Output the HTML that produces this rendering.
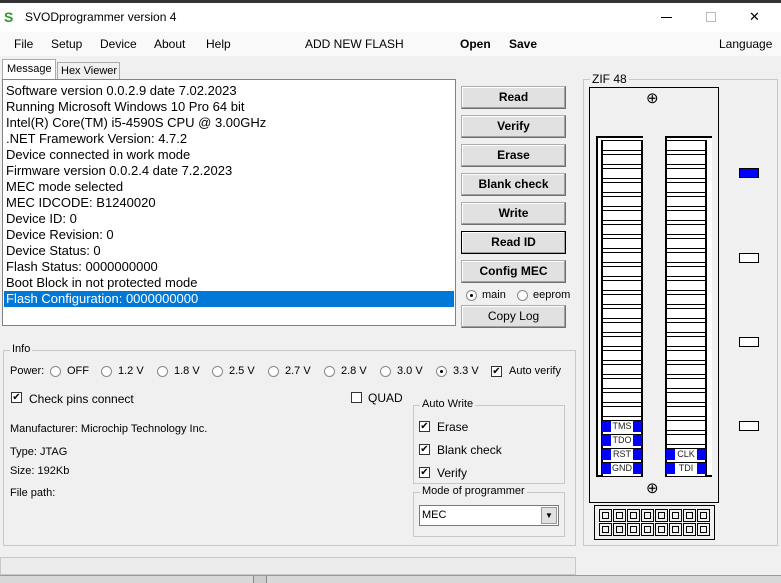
<!DOCTYPE html>
<html><head><meta charset="utf-8"><style>
*{box-sizing:border-box;margin:0;padding:0}
body{width:781px;height:583px;overflow:hidden;background:#f0f0f0;font-family:"Liberation Sans",sans-serif;font-size:12px;color:#000;position:relative}
.a{position:absolute}
.btn{position:absolute;left:461px;width:105px;height:23px;background:#e1e1e1;border:1px solid #adadad;border-right-color:#707070;border-bottom-color:#707070;box-shadow:inset -1px -1px 0 #a0a0a0,inset 1px 1px 0 #fff;text-align:center;font-weight:bold;font-size:12px;line-height:21px}
.grp{position:absolute;border:1px solid #c8c8c8}
.lg{position:absolute;top:-8px;background:#f0f0f0;padding:0 2px;font-size:12px}
.cb{position:absolute;width:11px;height:11px;border:1px solid #333;background:#fff;font-size:10px;line-height:9px;text-align:center}
.rd{position:absolute;width:11px;height:11px;border-radius:50%;border:1px solid #888;background:#fff}
.rd.on:after{content:"";position:absolute;left:3px;top:3px;width:3px;height:3px;border-radius:50%;background:#000}
.col{position:absolute;background:#fff;border:2px solid #000;border-right:none}
.pins{position:absolute;background:repeating-linear-gradient(#000 0 1px,#fff 1px 10px,#000 10px 11px,#fff 11px 14px);border-left:2px solid #000;border-right:2px solid #000}
.lab{position:absolute;height:11px;background:#0000ff;font-size:9px;line-height:11px;text-align:center;color:#222}
.lab span{background:#fff;display:inline-block;width:22px}
.sq{position:absolute;width:20px;height:10px;border:1px solid #000;background:#fff}
.t{font-size:11px}
</style></head><body>
<div class="a" style="left:0;top:0;width:781px;height:3px;background:#333"></div>
<div class="a" style="left:0;top:3px;width:781px;height:29px;background:#fff"></div>
<div class="a" style="left:4px;top:9px;color:#2a9a2a;font-weight:bold;font-size:14px">S</div>
<div class="a" style="left:25px;top:10px;font-size:12px">SVODprogrammer version 4</div>
<div class="a" style="left:661px;top:17px;width:11px;height:1px;background:#000"></div>
<div class="a" style="left:706px;top:12px;width:10px;height:10px;border:1px solid #bbb"></div>
<div class="a" style="left:749px;top:9px;font-size:13px">✕</div>
<div class="a" style="left:0;top:32px;width:781px;height:24px;background:#f9f9f9"></div>
<div class="a" style="top:37px;left:14px;font-size:12px">File</div>
<div class="a" style="top:37px;left:51px;font-size:12px">Setup</div>
<div class="a" style="top:37px;left:100px;font-size:12px">Device</div>
<div class="a" style="top:37px;left:154px;font-size:12px">About</div>
<div class="a" style="top:37px;left:206px;font-size:12px">Help</div>
<div class="a" style="top:37px;left:305px;font-size:12px">ADD NEW FLASH</div>
<div class="a" style="top:37px;left:460px;font-size:12px;font-weight:bold">Open</div>
<div class="a" style="top:37px;left:509px;font-size:12px;font-weight:bold">Save</div>
<div class="a" style="top:37px;left:719px;font-size:12px">Language</div>
<div class="a" style="left:2px;top:59px;width:54px;height:21px;background:#fff;border:1px solid #aaa;border-bottom:none;font-size:11px;padding:3px 0 0 4px">Message</div>
<div class="a" style="left:57px;top:62px;width:63px;height:17px;border:1px solid #aaa;border-bottom:none;font-size:11px;padding:2px 0 0 3px">Hex Viewer</div>
<div class="a" style="left:2px;top:79px;width:454px;height:247px;background:#fff;border:1px solid #828282;font-size:13px;line-height:16px;padding:3px 0 0 3px">
<div>Software version 0.0.2.9 date 7.02.2023</div>
<div>Running Microsoft Windows 10 Pro 64 bit</div>
<div>Intel(R) Core(TM) i5-4590S CPU @ 3.00GHz</div>
<div>.NET Framework Version: 4.7.2</div>
<div>Device connected in work mode</div>
<div>Firmware version 0.0.2.4 date 7.2.2023</div>
<div>MEC mode selected</div>
<div>MEC IDCODE: B1240020</div>
<div>Device ID: 0</div>
<div>Device Revision: 0</div>
<div>Device Status: 0</div>
<div>Flash Status: 0000000000</div>
<div>Boot Block in not protected mode</div>
<div style="background:#0078d7;color:#fff;margin-left:-2px;padding-left:2px;width:450px">Flash Configuration: 0000000000</div>
</div>
<div class="btn" style="top:86px">Read</div>
<div class="btn" style="top:115px">Verify</div>
<div class="btn" style="top:144px">Erase</div>
<div class="btn" style="top:173px">Blank check</div>
<div class="btn" style="top:202px">Write</div>
<div class="btn" style="top:231px;border:1px solid #000">Read ID</div>
<div class="btn" style="top:260px">Config MEC</div>
<div class="rd on" style="left:466px;top:290px"></div><div class="a" style="left:482px;top:289px;font-size:11px">main</div>
<div class="rd" style="left:517px;top:290px"></div><div class="a" style="left:533px;top:289px;font-size:11px">eeprom</div>
<div class="btn" style="top:305px;font-weight:normal">Copy Log</div>

<div class="grp" style="left:583px;top:79px;width:195px;height:467px"><div class="lg" style="left:6px">ZIF 48</div></div>
<div class="a" style="left:589px;top:87px;width:130px;height:416px;border:1px solid #000"></div>
<div class="a" style="left:646px;top:91px;font-size:15px;line-height:15px">⊕</div>
<div class="a" style="left:646px;top:481px;font-size:15px;line-height:15px">⊕</div>
<div class="col" style="left:596px;top:136px;width:47px;height:341px"></div>
<div class="pins" style="left:601px;top:140px;width:42px;height:336px"></div>
<div class="col" style="left:665px;top:136px;width:47px;height:341px"></div>
<div class="pins" style="left:665px;top:140px;width:42px;height:336px"></div>
<div class="lab" style="left:602px;top:421px;width:40px"><span>TMS</span></div>
<div class="lab" style="left:602px;top:435px;width:40px"><span>TDO</span></div>
<div class="lab" style="left:602px;top:449px;width:40px"><span>RST</span></div>
<div class="lab" style="left:602px;top:463px;width:40px"><span>GND</span></div>
<div class="lab" style="left:666px;top:449px;width:40px"><span>CLK</span></div>
<div class="lab" style="left:666px;top:463px;width:40px"><span>TDI</span></div>
<div class="a" style="left:594px;top:505px;width:121px;height:35px;border:1px solid #000;padding:3px 0 0 4px;line-height:0">
<svg width="112" height="28"><g fill="none" stroke="#000">
<rect x="0.5" y="0.5" width="12" height="12"/><rect x="3.5" y="3.5" width="6" height="6"/>
<rect x="14.5" y="0.5" width="12" height="12"/><rect x="17.5" y="3.5" width="6" height="6"/>
<rect x="28.5" y="0.5" width="12" height="12"/><rect x="31.5" y="3.5" width="6" height="6"/>
<rect x="42.5" y="0.5" width="12" height="12"/><rect x="45.5" y="3.5" width="6" height="6"/>
<rect x="56.5" y="0.5" width="12" height="12"/><rect x="59.5" y="3.5" width="6" height="6"/>
<rect x="70.5" y="0.5" width="12" height="12"/><rect x="73.5" y="3.5" width="6" height="6"/>
<rect x="84.5" y="0.5" width="12" height="12"/><rect x="87.5" y="3.5" width="6" height="6"/>
<rect x="98.5" y="0.5" width="12" height="12"/><rect x="101.5" y="3.5" width="6" height="6"/>
<rect x="0.5" y="14.5" width="12" height="12"/><rect x="3.5" y="17.5" width="6" height="6"/>
<rect x="14.5" y="14.5" width="12" height="12"/><rect x="17.5" y="17.5" width="6" height="6"/>
<rect x="28.5" y="14.5" width="12" height="12"/><rect x="31.5" y="17.5" width="6" height="6"/>
<rect x="42.5" y="14.5" width="12" height="12"/><rect x="45.5" y="17.5" width="6" height="6"/>
<rect x="56.5" y="14.5" width="12" height="12"/><rect x="59.5" y="17.5" width="6" height="6"/>
<rect x="70.5" y="14.5" width="12" height="12"/><rect x="73.5" y="17.5" width="6" height="6"/>
<rect x="84.5" y="14.5" width="12" height="12"/><rect x="87.5" y="17.5" width="6" height="6"/>
<rect x="98.5" y="14.5" width="12" height="12"/><rect x="101.5" y="17.5" width="6" height="6"/>
</g></svg></div>
<div class="sq" style="left:739px;top:168px;background:#0000ff"></div>
<div class="sq" style="left:739px;top:253px"></div>
<div class="sq" style="left:739px;top:337px"></div>
<div class="sq" style="left:739px;top:421px"></div>

<div class="grp" style="left:3px;top:350px;width:573px;height:196px"><div class="lg t" style="left:6px">Info</div></div>
<div class="a t" style="left:10px;top:365px">Power:</div>
<div class="rd" style="left:50px;top:366px"></div><div class="a t" style="left:67px;top:365px">OFF</div>
<div class="rd" style="left:101px;top:366px"></div><div class="a t" style="left:118px;top:365px">1.2 V</div>
<div class="rd" style="left:157px;top:366px"></div><div class="a t" style="left:174px;top:365px">1.8 V</div>
<div class="rd" style="left:212px;top:366px"></div><div class="a t" style="left:229px;top:365px">2.5 V</div>
<div class="rd" style="left:268px;top:366px"></div><div class="a t" style="left:285px;top:365px">2.7 V</div>
<div class="rd" style="left:324px;top:366px"></div><div class="a t" style="left:341px;top:365px">2.8 V</div>
<div class="rd" style="left:380px;top:366px"></div><div class="a t" style="left:397px;top:365px">3.0 V</div>
<div class="rd on" style="left:436px;top:366px"></div><div class="a t" style="left:453px;top:365px">3.3 V</div>
<div class="cb" style="left:491px;top:366px">✔</div><div class="a t" style="left:509px;top:365px">Auto verify</div>
<div class="cb" style="left:11px;top:392px">✔</div><div class="a" style="left:29px;top:392px">Check pins connect</div>
<div class="cb" style="left:351px;top:392px"></div><div class="a" style="left:368px;top:391px">QUAD</div>
<div class="a t" style="left:10px;top:423px">Manufacturer: Microchip Technology Inc.</div>
<div class="a t" style="left:10px;top:446px">Type: JTAG</div>
<div class="a t" style="left:10px;top:465px">Size: 192Kb</div>
<div class="a t" style="left:10px;top:487px">File path:</div>
<div class="grp" style="left:413px;top:405px;width:152px;height:79px"><div class="lg t" style="left:6px">Auto Write</div></div>
<div class="cb" style="left:419px;top:421px">✔</div><div class="a" style="left:437px;top:420px">Erase</div>
<div class="cb" style="left:419px;top:444px">✔</div><div class="a" style="left:437px;top:443px">Blank check</div>
<div class="cb" style="left:419px;top:467px">✔</div><div class="a" style="left:437px;top:466px">Verify</div>
<div class="grp" style="left:413px;top:492px;width:152px;height:45px"><div class="lg t" style="left:6px">Mode of programmer</div></div>
<div class="a" style="left:419px;top:505px;width:140px;height:21px;background:#fff;border:1px solid #7a7a7a;font-size:11px;padding:3px 0 0 2px">MEC</div>
<div class="a" style="left:541px;top:507px;width:16px;height:17px;background:#e1e1e1;border:1px solid #999;font-size:8px;text-align:center;line-height:15px">▼</div>
<div class="a" style="left:0;top:557px;width:576px;height:18px;border:1px solid #c8c8c8;background:#ececec"></div>
<div class="a" style="left:0;top:575px;width:781px;height:8px;background:#d8d8d8;border-top:1px solid #999"></div>
<div class="a" style="left:253px;top:576px;width:14px;height:7px;background:#ccc;border-left:1px solid #888;border-right:1px solid #888"></div>
</body></html>
